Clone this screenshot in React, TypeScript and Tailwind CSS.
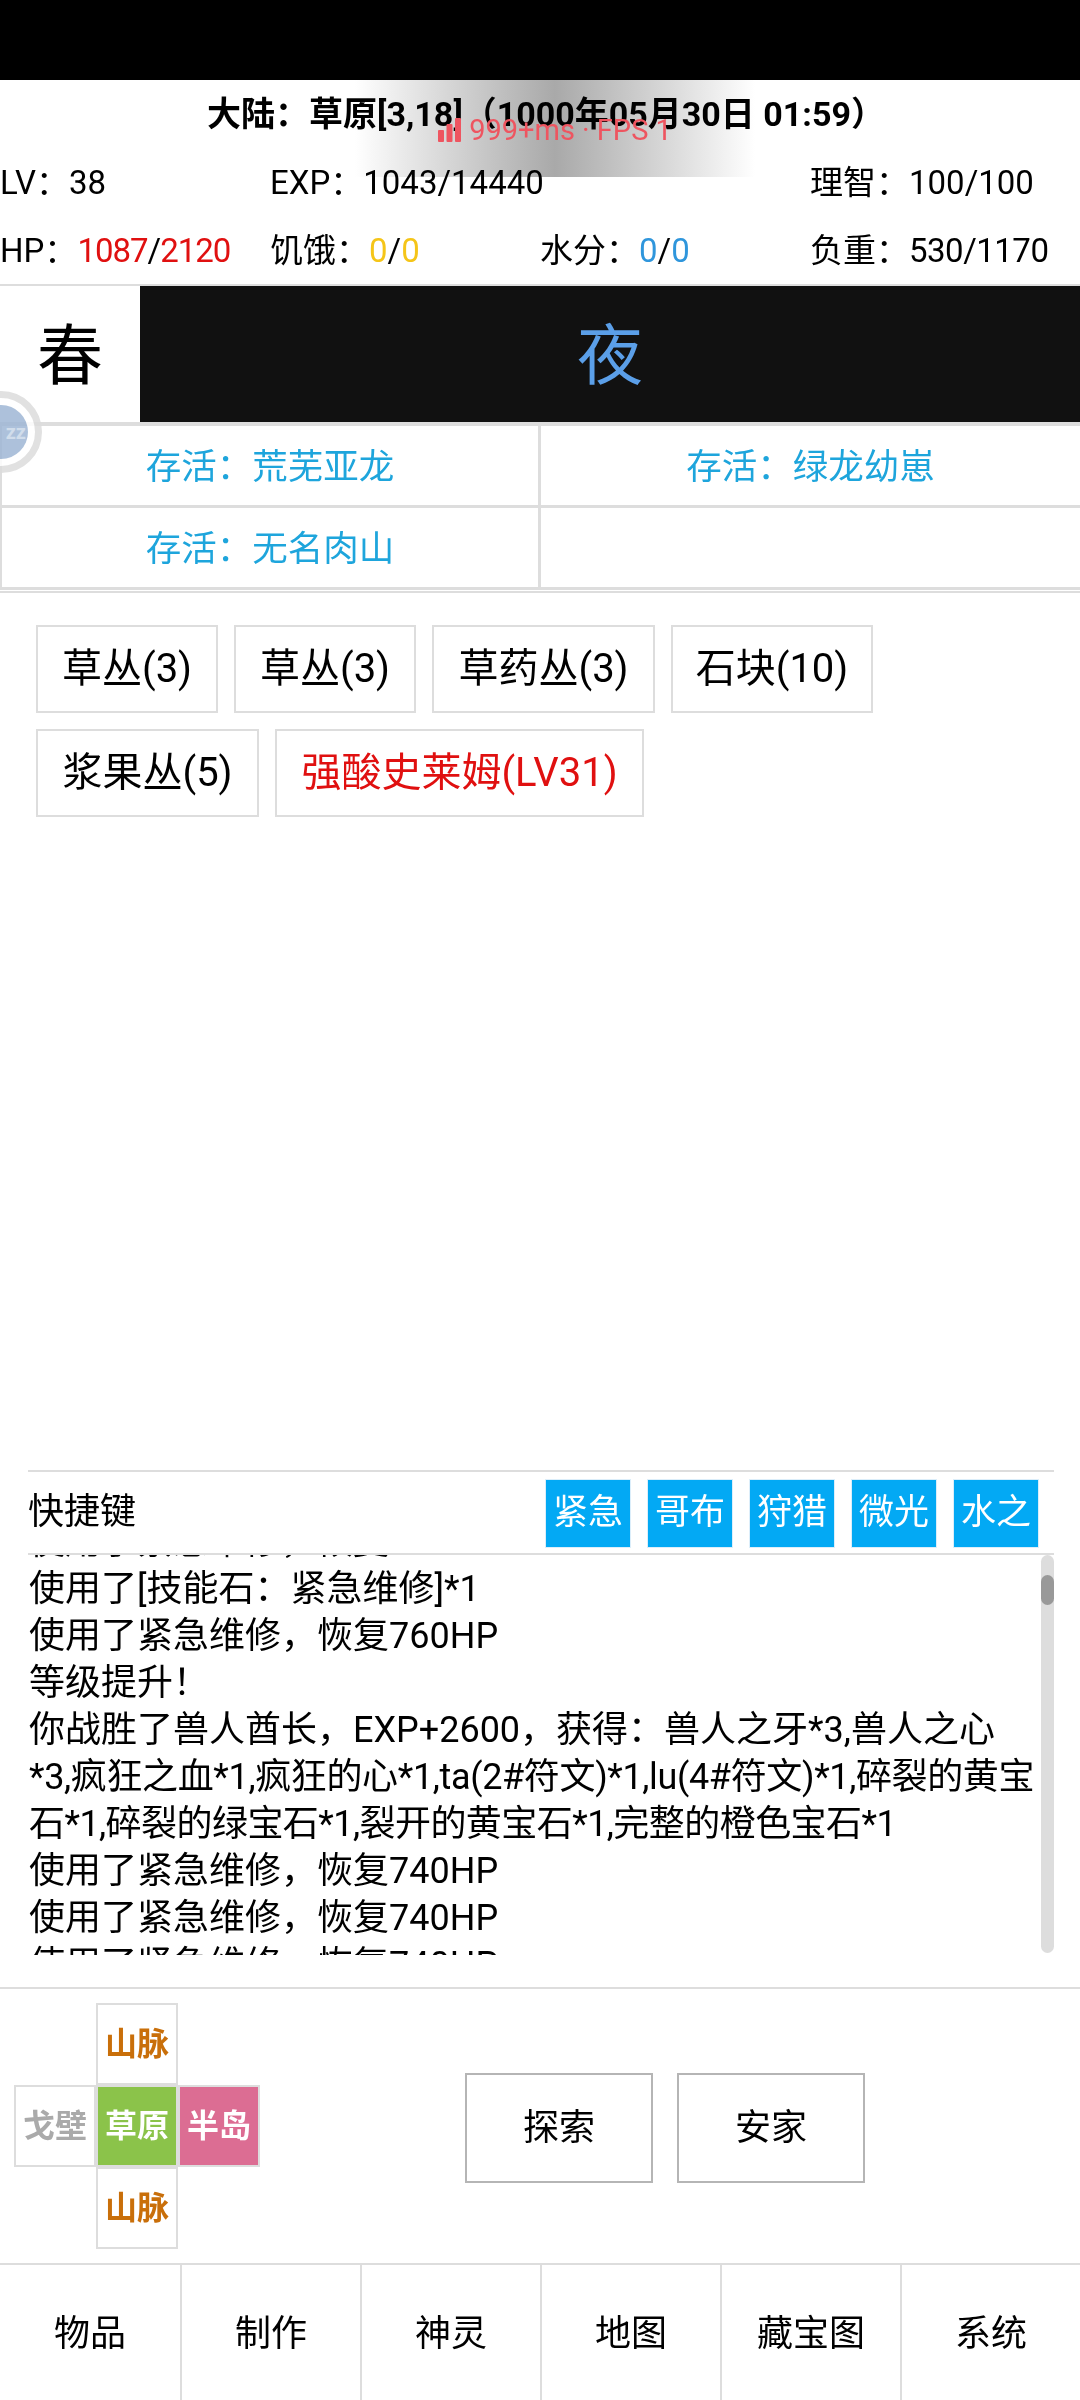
import React from 'react';

const chips = [
  { label: '草丛(3)', width: 'w-[182px]' },
  { label: '草丛(3)', width: 'w-[182px]' },
  { label: '草药丛(3)', width: 'w-[223px]' },
  { label: '石块(10)', width: 'w-[202px]' },
  { label: '浆果丛(5)', width: 'w-[223px]' },
  { label: '强酸史莱姆(LV31)', width: 'w-[369px]', danger: true },
];

const shortcuts = ['紧急', '哥布', '狩猎', '微光', '水之'];
const navItems = ['物品', '制作', '神灵', '地图', '藏宝图', '系统'];

const logLines = [
  { text: '使用了紧急维修，恢复760HP', tracking: '' },
  { text: '使用了[技能石：紧急维修]*1', tracking: '' },
  { text: '使用了紧急维修，恢复760HP', tracking: '' },
  { text: '等级提升！', tracking: '' },
  { text: '你战胜了兽人酋长，EXP+2600，获得：兽人之牙*3,兽人之心', tracking: '' },
  { text: '*3,疯狂之血*1,疯狂的心*1,ta(2#符文)*1,lu(4#符文)*1,碎裂的黄宝', tracking: 'tracking-[-0.35px]' },
  { text: '石*1,碎裂的绿宝石*1,裂开的黄宝石*1,完整的橙色宝石*1', tracking: 'tracking-[-0.55px]' },
  { text: '使用了紧急维修，恢复740HP', tracking: '' },
  { text: '使用了紧急维修，恢复740HP', tracking: '' },
  { text: '使用了紧急维修，恢复740HP', tracking: '' },
];

const Cell = ({ children, className = '' }: { children?: React.ReactNode; className?: string }) => (
  <div className={`flex h-[82px] w-[82px] items-center justify-center border-2 border-[#dddddd] text-[32px] font-bold ${className}`}>
    {children}
  </div>
);

const PerfOverlay = () => (
  <>
    <div className="absolute left-[355px] top-[80px] h-[97px] w-[400px] bg-gradient-to-r from-white via-[#a9a9a9] to-white mix-blend-multiply" />
    <div className="absolute left-[355px] top-[112px] flex h-[36px] w-[400px] items-center justify-center gap-[8px] text-[29px] leading-none text-[#ee5560]">
      <svg width="23" height="24" viewBox="0 0 23 24" fill="#ee5560">
        <rect x="0" y="12" width="6" height="12" rx="1" />
        <rect x="8.5" y="6" width="6" height="18" rx="1" />
        <rect x="17" y="0" width="6" height="24" rx="1" />
      </svg>
      <span>999+ms · FPS 1</span>
    </div>
  </>
);

const FloatBall = () => (
  <div className="absolute left-[-40px] top-[391px] flex h-[82px] w-[82px] items-center justify-center rounded-full border-[7px] border-[#dcdcdc] bg-white opacity-85">
    <div className="flex h-[54px] w-[54px] items-center justify-end rounded-full bg-[#9fb7d5] pr-[2px] text-[20px] font-bold leading-none text-[#c9d7e8]">
      zz
    </div>
  </div>
);

export default function App() {
  return (
    <div className="relative flex h-[2400px] w-[1080px] flex-col overflow-hidden bg-white font-['Roboto','Noto_Sans_CJK_SC',sans-serif] text-black">
      <div className="h-[80px] shrink-0 bg-black" />

      <div className="flex h-[68px] shrink-0 items-center justify-center whitespace-nowrap pl-[12px] text-[34px] font-bold">
        大陆：草原[3,18]（1000年05月30日 01:59）
      </div>

      <div className="grid h-[68px] shrink-0 grid-cols-4 items-center whitespace-nowrap pt-[2px] text-[33px]">
        <div>LV：38</div>
        <div>EXP：1043/14440</div>
        <div />
        <div>理智：100/100</div>
      </div>
      <div className="grid h-[68px] shrink-0 grid-cols-4 items-center whitespace-nowrap pt-[2px] text-[33px]">
        <div>
          HP：
          <span className="tracking-[-1px]">
            <span className="text-[#e01010]">1087</span>/<span className="text-[#e01010]">2120</span>
          </span>
        </div>
        <div>
          饥饿：<span className="text-[#f5c518]">0</span>/<span className="text-[#f5c518]">0</span>
        </div>
        <div>
          水分：<span className="text-[#2f96dc]">0</span>/<span className="text-[#2f96dc]">0</span>
        </div>
        <div>
          负重：<span className="tracking-[-0.5px]">530/1170</span>
        </div>
      </div>

      <div className="flex h-[138px] shrink-0 border-t-2 border-[#dddddd]">
        <div className="flex w-[140px] items-center justify-center pt-[5px] text-[66px] leading-none">春</div>
        <div className="flex flex-1 items-center justify-center bg-[#111111] pt-[5px] text-[66px] leading-none text-[#5b9fe8]">夜</div>
      </div>

      <div className="h-[170px] shrink-0 border-t-4 border-[#dddddd]">
        <div className="grid h-[82px] grid-cols-2 border-b-[3px] border-l-2 border-[#dddddd]">
          <div className="flex items-center justify-center border-r-[3px] border-[#dddddd] pt-[4px] text-[35.5px] text-[#1ea5dc]">存活：荒芜亚龙</div>
          <div className="flex items-center justify-center pt-[4px] text-[35.5px] text-[#1ea5dc]">存活：绿龙幼崽</div>
        </div>
        <div className="grid h-[82px] grid-cols-2 border-b-[3px] border-l-2 border-[#dddddd]">
          <div className="flex items-center justify-center border-r-[3px] border-[#dddddd] pt-[4px] text-[35.5px] text-[#1ea5dc]">存活：无名肉山</div>
          <div />
        </div>
        <div className="mt-[1px] h-[2px] bg-[#dddddd]" />
      </div>

      <div className="flex flex-1 flex-wrap content-start gap-x-[16px] gap-y-[16px] pl-[36px] pr-[190px] pt-[33px]">
        {chips.map((chip, i) => (
          <div
            key={i}
            className={`flex h-[88px] items-center justify-center border-2 border-[#dddddd] text-[40px] ${chip.width} ${chip.danger ? 'text-[#e01010]' : ''}`}
          >
            {chip.label}
          </div>
        ))}
      </div>

      <div className="ml-[28px] mr-[26px] flex h-[85px] shrink-0 items-center justify-between border-y-2 border-[#dddddd] pr-[15px]">
        <span className="pb-[2px] text-[36px]">快捷键</span>
        <div className="mt-[1px] flex gap-[16px]">
          {shortcuts.map((s) => (
            <div key={s} className="flex h-[69px] w-[86px] items-center justify-center border border-[#dceefa] bg-[#03a9f4] text-[35px] text-white">
              {s}
            </div>
          ))}
        </div>
      </div>

      <div className="ml-[28px] mr-[26px] flex h-[400px] shrink-0 overflow-hidden">
        <div className="mt-[-36px] min-w-0 flex-1 pl-[1px] text-[36px] leading-[47px]">
          {logLines.map((line, i) => (
            <div key={i} className={`whitespace-nowrap ${line.tracking}`}>
              {line.text}
            </div>
          ))}
        </div>
        <div className="h-[398px] w-[13px] shrink-0 rounded-full bg-[#dddddd] pt-[20px]">
          <div className="h-[30px] rounded-full bg-[#999999]" />
        </div>
      </div>

      <div className="mt-[32px] flex h-[276px] shrink-0 items-center border-t-2 border-[#dddddd]">
        <div className="ml-[14px] grid w-[246px] grid-cols-3">
          <div />
          <Cell className="text-[#c96f0a]">山脉</Cell>
          <div />
          <Cell className="text-[#aaaaaa]">戈壁</Cell>
          <Cell className="bg-[#8bc34a] text-white">草原</Cell>
          <Cell className="bg-[#dc6d93] text-white">半岛</Cell>
          <div />
          <Cell className="text-[#c96f0a]">山脉</Cell>
          <div />
        </div>
        <div className="ml-[205px] mt-[3px] flex gap-[24px]">
          <div className="flex h-[110px] w-[188px] items-center justify-center border-2 border-[#b5b5b5] text-[36px]">探索</div>
          <div className="flex h-[110px] w-[188px] items-center justify-center border-2 border-[#b5b5b5] text-[36px]">安家</div>
        </div>
      </div>

      <div className="grid h-[137px] shrink-0 grid-cols-6 border-t-2 border-[#dddddd]">
        {navItems.map((item, i) => (
          <div key={item} className={`flex items-center justify-center pt-[2px] text-[36px] ${i > 0 ? 'border-l-2 border-[#dddddd]' : ''}`}>
            {item}
          </div>
        ))}
      </div>

      <PerfOverlay />
      <FloatBall />
    </div>
  );
}
